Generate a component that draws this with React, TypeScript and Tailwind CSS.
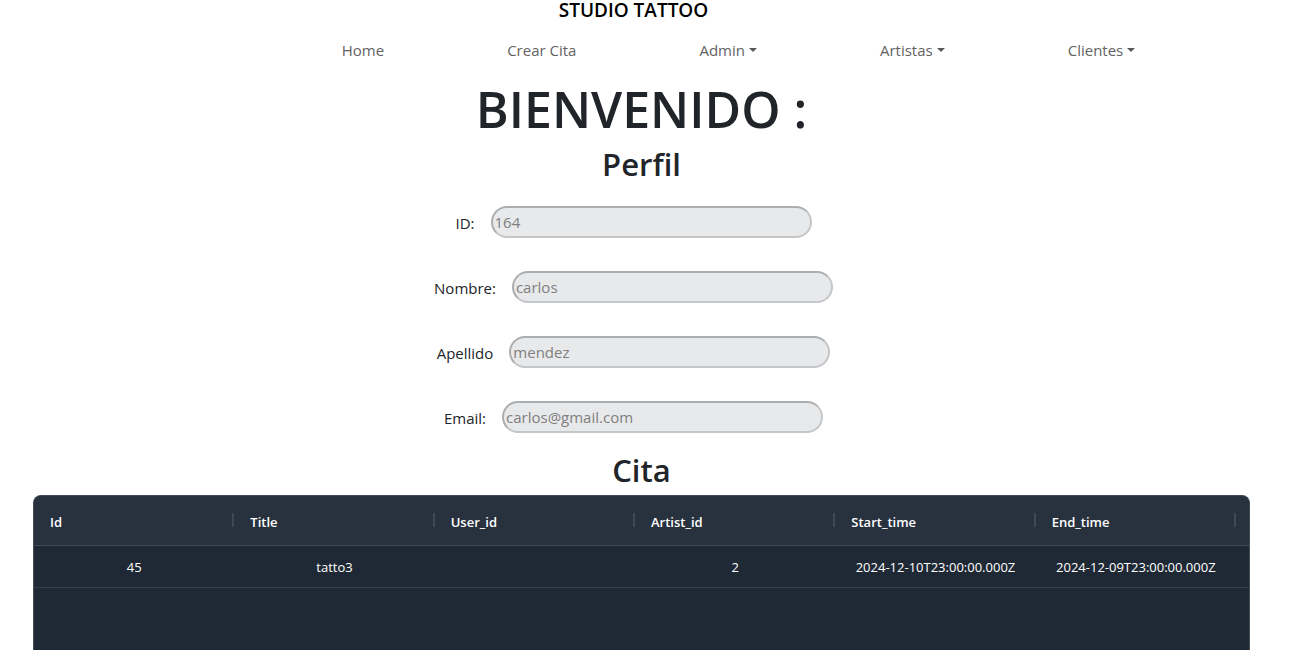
const navItems = [
  { label: "Home", menu: false },
  { label: "Crear Cita", menu: false },
  { label: "Admin", menu: true },
  { label: "Artistas", menu: true },
  { label: "Clientes", menu: true },
];

const fields = [
  { id: "id", label: "ID:", value: "164" },
  { id: "nombre", label: "Nombre:", value: "carlos" },
  { id: "apellido", label: "Apellido", value: "mendez" },
  { id: "email", label: "Email:", value: "carlos@gmail.com" },
];

const columns = ["Id", "Title", "User_id", "Artist_id", "Start_time", "End_time"];

const rows = [
  ["45", "tatto3", "", "2", "2024-12-10T23:00:00.000Z", "2024-12-09T23:00:00.000Z"],
];

function Caret() {
  return (
    <span className="ml-1 border-x-4 border-t-4 border-x-transparent border-t-[#595959]" />
  );
}

function Header() {
  return (
    <header className="flex flex-col gap-[10px]">
      <a href="#" className="self-center text-[19px] leading-5 font-semibold text-black">
        STUDIO TATTOO
      </a>
      <nav className="flex h-10 items-center justify-center gap-[123px] pl-[210px] text-[15px] text-[#636363]">
        {navItems.map((item) =>
          item.menu ? (
            <button key={item.label} type="button" className="flex items-center whitespace-nowrap">
              {item.label}
              <Caret />
            </button>
          ) : (
            <a key={item.label} href="#" className="whitespace-nowrap">
              {item.label}
            </a>
          ),
        )}
      </nav>
    </header>
  );
}

function Profile() {
  return (
    <form className="mt-[23px] flex flex-col gap-[33px]">
      {fields.map((field) => (
        <div key={field.id} className="flex items-center justify-center gap-4">
          <label htmlFor={field.id} className="pt-0.5 text-[15px] leading-6">
            {field.label}
          </label>
          <input
            id={field.id}
            type="text"
            disabled
            defaultValue={field.value}
            className="h-8 w-[321px] rounded-2xl border-2 border-t-[#abadaf] border-r-[#c5c6c8] border-b-[#c5c6c8] border-l-[#abadaf] bg-[#e8e9eb] px-0.5 text-[15px] text-[#7f7f7f]"
          />
        </div>
      ))}
    </form>
  );
}

function Appointments() {
  return (
    <div className="mr-[11px] min-h-0 flex-1 px-[33px]">
      <div className="h-full overflow-hidden rounded-t-lg border border-b-0 border-[#424c57] bg-[#1f2935]">
        <table className="w-full table-fixed border-collapse text-[13px] text-white">
          <thead>
            <tr className="h-[49px] border-b border-[#424c57] bg-[#28323e]">
              {columns.map((name) => (
                <th key={name} className="p-0 text-left font-semibold" scope="col">
                  <div className="flex items-center justify-between pl-4">
                    <span className="pt-1">{name}</span>
                    <span className="h-3.5 w-0.5 bg-[#3f4954]" />
                  </div>
                </th>
              ))}
              <td className="w-[13px]" />
            </tr>
          </thead>
          <tbody>
            {rows.map((row) => (
              <tr key={row[0]} className="h-[42px] border-b border-[#353f4a]">
                {row.map((cell, i) => (
                  <td key={columns[i]} className="p-0 pt-1 text-center whitespace-nowrap">
                    {cell}
                  </td>
                ))}
                <td />
              </tr>
            ))}
          </tbody>
        </table>
      </div>
    </div>
  );
}

export default function App() {
  return (
    <div className="flex h-screen flex-col overflow-hidden bg-white font-['Open_Sans','Noto_Sans',sans-serif] text-[#212529]">
      <div className="mr-[27px]">
        <Header />
      </div>
      <main className="flex min-h-0 flex-1 flex-col">
        <h1 className="mt-[9px] mr-[11px] text-center text-[50px] leading-[60px] font-semibold">BIENVENIDO :</h1>
        <h2 className="mt-1.5 mr-[11px] text-center text-[31px] leading-[38px] font-semibold">Perfil</h2>
        <div className="mr-[27px]">
          <Profile />
        </div>
        <h2 className="mt-[18px] mr-[11px] mb-1.5 text-center text-[31px] leading-[38px] font-semibold">Cita</h2>
        <Appointments />
      </main>
    </div>
  );
}
